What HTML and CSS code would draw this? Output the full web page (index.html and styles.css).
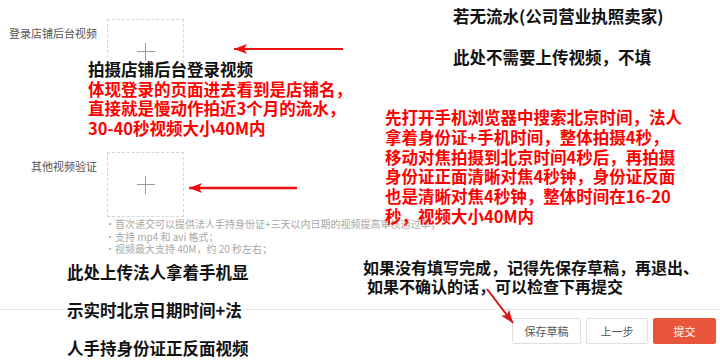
FILE: index.html
```html
<!DOCTYPE html>
<html>
	<head>
		<meta charset="UTF-8">
		<title>视频验证</title>
		<link rel="stylesheet" href="styles.css">
	</head>
	<body>
		<div class="page">
			<div class="form">
				<div class="row">
					<div class="label">登录店铺后台视频</div>
					<div class="upload"><span class="plus"></span></div>
				</div>
				<div class="row row-other">
					<div class="label">其他视频验证</div>
					<div class="upload"><span class="plus"></span></div>
				</div>
				<ul class="hint">
					<li>·首次递交可以提供法人手持身份证+三天以内日期的视频提高审核通过率；</li>
					<li>·支持 mp4 和 avi 格式；</li>
					<li>·视频最大支持 40M，约 20 秒左右；</li>
				</ul>
			</div>
			<div class="footer">
				<button class="btn">保存草稿</button>
				<button class="btn">上一步</button>
				<button class="btn btn-primary">提交</button>
			</div>

			<!-- 标注 -->
			<div class="note note-shop">
				<p class="black">拍摄店铺后台登录视频</p>
				<p class="red">体现登录的页面进去看到是店铺名，</p>
				<p class="red">直接就是慢动作拍近3个月的流水，</p>
				<p class="red">30-40秒视频大小40M内</p>
			</div>
			<div class="note note-company">
				<p>若无流水(公司营业执照卖家)</p>
				<p class="gap">此处不需要上传视频，不填</p>
			</div>
			<div class="note note-steps red">
				<p>先打开手机浏览器中搜索北京时间，法人</p>
				<p>拿着身份证+手机时间，整体拍摄4秒，</p>
				<p>移动对焦拍摄到北京时间4秒后，再拍摄</p>
				<p>身份证正面清晰对焦4秒钟，身份证反面</p>
				<p>也是清晰对焦4秒钟，整体时间在16-20</p>
				<p>秒，视频大小40M内</p>
			</div>
			<div class="note note-upload">
				<p>此处上传法人拿着手机显</p>
				<p>示实时北京日期时间+法</p>
				<p>人手持身份证正反面视频</p>
			</div>
			<div class="note note-save">
				<p>如果没有填写完成，记得先保存草稿，再退出、</p>
				<p class="indent">如果不确认的话，可以检查下再提交</p>
			</div>

			<svg class="arrows" width="720" height="361" viewBox="0 0 720 361">
				<defs>
					<marker id="head" markerUnits="userSpaceOnUse" markerWidth="14" markerHeight="10" refX="13" refY="5" orient="auto">
						<path d="M0,0 L13,5 L0,10 L3,5 z" fill="#ee1111"/>
					</marker>
					<marker id="head2" markerUnits="userSpaceOnUse" markerWidth="14" markerHeight="10" refX="13" refY="5" orient="auto">
						<path d="M0,0 L13,5 L0,10 L3,5 z" fill="#d81818"/>
					</marker>
				</defs>
				<line x1="343" y1="49" x2="234" y2="49" stroke="#ee1111" stroke-width="2" marker-end="url(#head)"/>
				<line x1="297" y1="188" x2="189" y2="188" stroke="#ee1111" stroke-width="2.5" marker-end="url(#head)"/>
				<line x1="487" y1="289" x2="513" y2="323" stroke="#d81818" stroke-width="2" marker-end="url(#head2)"/>
			</svg>
		</div>
	</body>
</html>
```
FILE: styles.css
```css
*{
	padding: 0;
	margin: 0;
	box-sizing: border-box;
}
body{
	background: #fff;
	font-family: "Noto Sans CJK SC", "Liberation Sans", sans-serif;
}
.page{
	position: relative;
	width: 720px;
	height: 361px;
	overflow: hidden;
}
.form{
	padding-top: 19px;
}
.row{
	display: flex;
}
.row-other{
	margin-top: 68px;
}
.label{
	width: 97px;
	margin-right: 10px;
	padding-top: 6px;
	text-align: right;
	font-size: 11px;
	line-height: 16px;
	color: #555;
}
.upload{
	position: relative;
	width: 77px;
	height: 65px;
	border: 1px dashed #d6d6d6;
}
.plus{
	position: absolute;
	left: 29px;
	top: 23px;
	width: 18px;
	height: 18px;
}
.plus:before,.plus:after{
	content: "";
	position: absolute;
	background: #9a9a9a;
}
.plus:before{
	left: 0;
	top: 8px;
	width: 18px;
	height: 1px;
}
.plus:after{
	left: 8px;
	top: 0;
	width: 1px;
	height: 18px;
}
.hint{
	list-style: none;
	padding-left: 105px;
	margin-top: 1px;
	font-size: 10px;
	line-height: 12.5px;
	color: #a8a8a8;
}
.footer{
	margin-top: 53px;
	border-top: 1px solid #e6e6e6;
	padding: 8px 4px 0 0;
	display: flex;
	justify-content: flex-end;
	gap: 5px;
}
.btn{
	height: 26px;
	width: 62px;
	background: #fff;
	border: 1px solid #e0e0e0;
	border-radius: 2px;
	font-family: "Noto Sans CJK SC", sans-serif;
	font-size: 11px;
	color: #555;
}
.btn:first-child{
	width: 69px;
}
.btn-primary{
	width: 63px;
	background: #e9553b;
	border-color: #e9553b;
	color: #fff;
}

/* 标注文字 */
.note{
	position: absolute;
	font-weight: bold;
	font-size: 16.5px;
	line-height: 20px;
	color: #111;
	white-space: nowrap;
}
.red{
	color: #f00;
}
.black{
	color: #111;
}
.note-shop{
	left: 88px;
	top: 60px;
	line-height: 19.7px;
}
.note-company{
	left: 453px;
	top: 6px;
}
.note-company .gap{
	margin-top: 21px;
}
.note-steps{
	left: 385px;
	top: 108px;
	line-height: 19.8px;
}
.note-upload{
	left: 67px;
	top: 253px;
	line-height: 38px;
}
.note-save{
	left: 363px;
	top: 258px;
	font-size: 16px;
	line-height: 19px;
}
.note-save .indent{
	margin-left: 4px;
}
.arrows{
	position: absolute;
	left: 0;
	top: 0;
	pointer-events: none;
}
```
